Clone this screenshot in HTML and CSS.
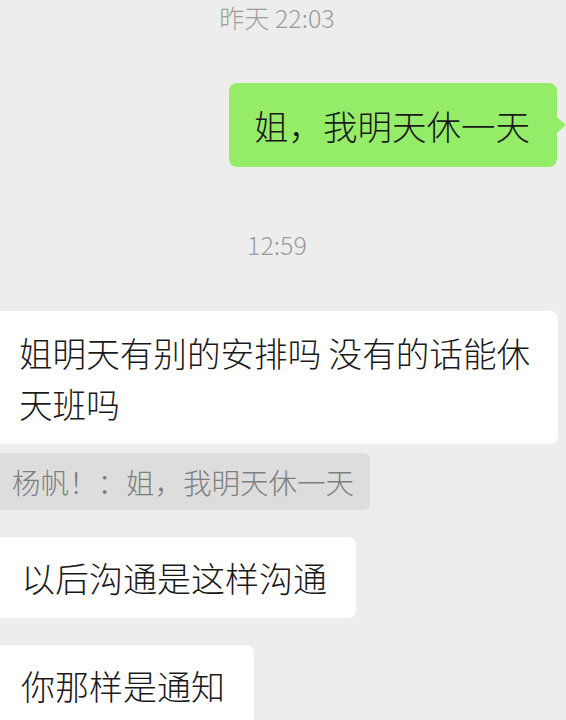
FILE: index.html
```html
<!DOCTYPE html>
<html lang="zh-CN">
<head>
<meta charset="utf-8">
<title>Chat</title>
<link rel="stylesheet" href="styles.css">
</head>
<body>
<div class="chat">
  <div class="time time-first">昨天 22:03</div>
  <div class="row row-right">
    <div class="bubble bubble-me">姐，我明天休一天</div>
  </div>
  <div class="time time-second">12:59</div>
  <div class="row">
    <div class="bubble bubble-other bubble-wide">姐明天有别的安排吗 没有的话能休天班吗</div>
  </div>
  <div class="row">
    <div class="quote">杨帆！：姐，我明天休一天</div>
  </div>
  <div class="row row-gap">
    <div class="bubble bubble-other">以后沟通是这样沟通</div>
  </div>
  <div class="row row-gap">
    <div class="bubble bubble-other">你那样是通知</div>
  </div>
</div>
</body>
</html>
```

FILE: styles.css
```css
html, body {
  margin: 0;
  padding: 0;
  background: #ededed;
}

body {
  width: 566px;
  height: 720px;
  overflow: hidden;
  font-family: "Noto Sans CJK SC", "Noto Sans", sans-serif;
  font-weight: 300;
  color: #191919;
}

.chat {
  display: flex;
  flex-direction: column;
}

.time {
  font-size: 25px;
  line-height: 30px;
  color: #9c9c9c;
  text-align: center;
  padding-right: 12px;
}

.time-first {
  margin-top: 2px;
}

.time-second {
  margin-top: 62px;
}

.row {
  display: flex;
}

.row-right {
  justify-content: flex-end;
  margin-top: 51px;
}

.bubble {
  font-size: 34px;
  line-height: 48px;
  border-radius: 8px;
  box-sizing: border-box;
}

.bubble-me {
  position: relative;
  background: #95ec69;
  font-size: 34.5px;
  padding: 18px 27px 18px 25px;
  margin-right: 9px;
}

.bubble-me::after {
  content: "";
  position: absolute;
  right: -9px;
  top: 34px;
  border-top: 8px solid transparent;
  border-bottom: 8px solid transparent;
  border-left: 9px solid #95ec69;
}

.bubble-other {
  background: #ffffff;
  padding: 17px 29px 16px 21px;
  border-radius: 0 8px 8px 0;
}

.bubble-wide {
  width: 558px;
  font-size: 33.6px;
  padding: 16px 18px 15px 19px;
  line-height: 51px;
  margin-top: 52px;
}

.quote {
  margin-top: 9px;
  background: #dddddd;
  color: #7e7e7e;
  font-size: 28.5px;
  line-height: 57px;
  padding: 0 16px 0 12px;
  border-radius: 0 6px 6px 0;
}

.row-gap {
  margin-top: 27px;
}
```
